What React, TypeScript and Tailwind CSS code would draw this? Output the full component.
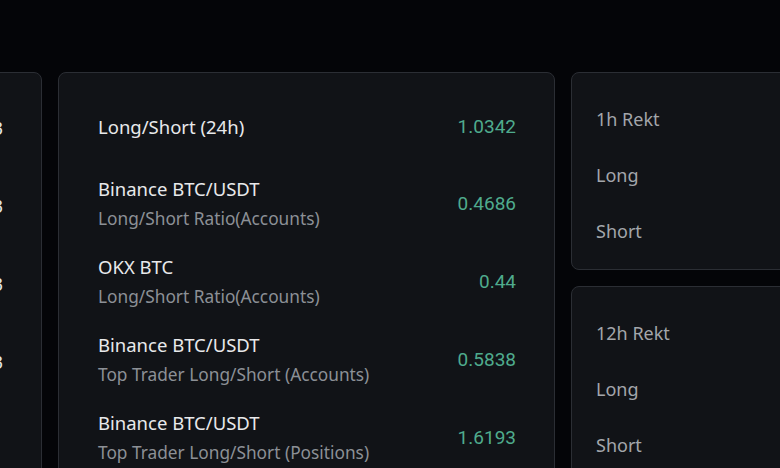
import React from "react";

const rows = [
  { title: "Long/Short (24h)", sub: "", value: "1.0342" },
  { title: "Binance BTC/USDT", sub: "Long/Short Ratio(Accounts)", value: "0.4686" },
  { title: "OKX BTC", sub: "Long/Short Ratio(Accounts)", value: "0.44" },
  { title: "Binance BTC/USDT", sub: "Top Trader Long/Short (Accounts)", value: "0.5838" },
  { title: "Binance BTC/USDT", sub: "Top Trader Long/Short (Positions)", value: "1.6193" },
];

const leftVals = ["$1.23", "$4.53", "$0.83", "$2.13"];

function RektCard({ label }: { label: string }) {
  return (
    <div className="rounded-lg border border-[#2b2e34] bg-[#111317] pl-[24px] pt-[34px] pb-[26px] flex flex-col gap-[32px] text-[18px] leading-[24px] text-[#a3a6ab]">
      <div>{label}</div>
      <div>Long</div>
      <div>Short</div>
    </div>
  );
}

export default function App() {
  return (
    <div
      className="w-[780px] h-[468px] overflow-hidden bg-[#040508] pt-[72px]"
      style={{ fontFamily: '"Noto Sans", Inter, sans-serif' }}
    >
      <div className="flex gap-[16px] items-start">
        <div className="w-[200px] shrink-0 -ml-[158px] h-[420px] rounded-lg border border-[#2b2e34] bg-[#111317] pr-[38px] pt-[43px] flex flex-col gap-[54px] items-end text-[18px] leading-[24px] text-[#e6e7e9]">
          {leftVals.map((v, i) => (
            <div key={i}>{v}</div>
          ))}
        </div>
        <div className="w-[497px] shrink-0 h-[420px] rounded-lg border border-[#2b2e34] bg-[#111317] pl-[39px] pr-[38px] pt-[42px]">
          {rows.map((r, i) => (
            <div
              key={i}
              className={`flex items-center justify-between ${i === 0 ? "mb-[38px]" : "mb-[25px]"}`}
            >
              <div className="flex flex-col">
                <div className="text-[18.5px] leading-[24px] text-[#e8e9eb]">{r.title}</div>
                {r.sub && (
                  <div className="text-[17.3px] leading-[22px] mt-[7px] text-[#8c9096]">{r.sub}</div>
                )}
              </div>
              <div
                className="text-[19px] leading-[24px] text-[#4fab8d]"
                style={{ fontFamily: 'Roboto, "Noto Sans", sans-serif' }}
              >
                {r.value}
              </div>
            </div>
          ))}
        </div>
        <div className="flex-1 min-w-[220px] -mr-[40px] flex flex-col gap-[16px]">
          <RektCard label="1h Rekt" />
          <RektCard label="12h Rekt" />
        </div>
      </div>
    </div>
  );
}
